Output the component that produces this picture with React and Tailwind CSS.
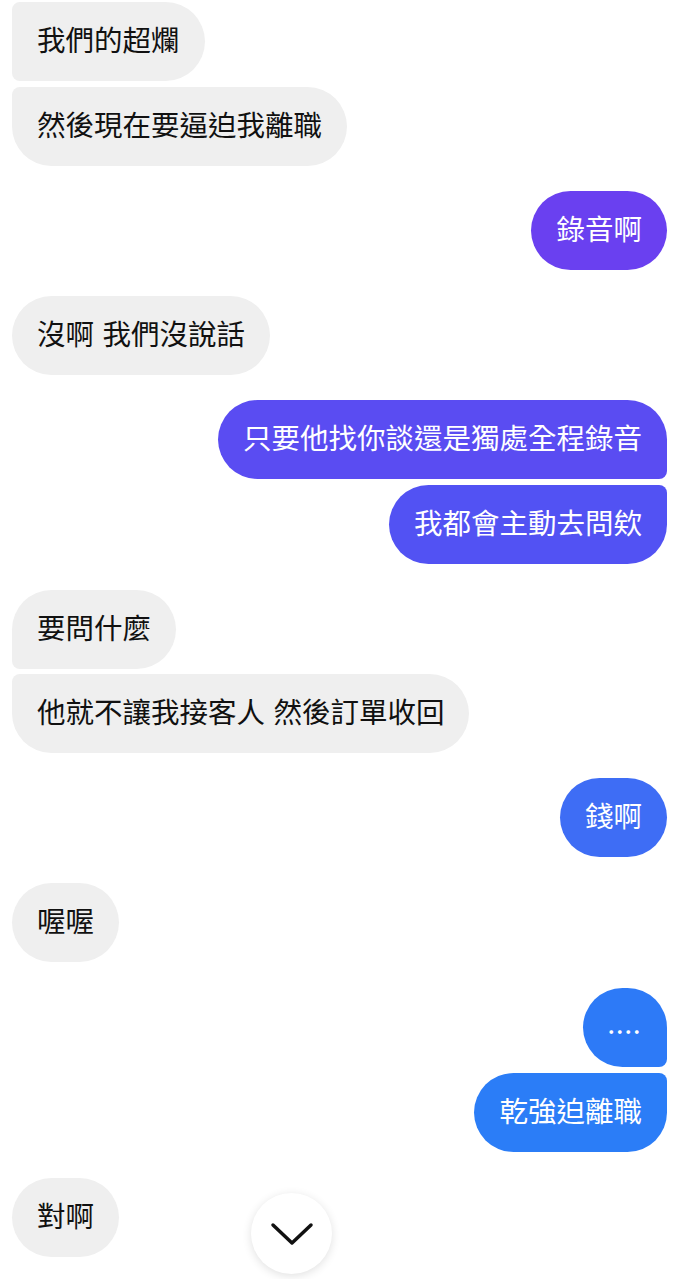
const font = { fontFamily: '"Noto Sans CJK TC", "Noto Sans", sans-serif' };

const messages = [
    { side: 'l', text: '我們的超爛', r: 'rounded-[40px] rounded-tl-[8px] rounded-bl-[8px]', mt: 'mt-0' },
    { side: 'l', text: '然後現在要逼迫我離職', r: 'rounded-[40px] rounded-tl-[8px]', mt: 'mt-[6px]' },
    { side: 'r', text: '錄音啊', r: 'rounded-[40px]', mt: 'mt-[25px]', bg: 'bg-[#6a40f0]' },
    { side: 'l', text: '沒啊 我們沒說話', r: 'rounded-[40px]', mt: 'mt-[26px]' },
    { side: 'r', text: '只要他找你談還是獨處全程錄音', r: 'rounded-[40px] rounded-br-[8px]', mt: 'mt-[25px]', bg: 'bg-[#5a4cf2]' },
    { side: 'r', text: '我都會主動去問欸', r: 'rounded-[40px] rounded-tr-[8px]', mt: 'mt-[6px]', bg: 'bg-[#5252f3]' },
    { side: 'l', text: '要問什麼', r: 'rounded-[40px] rounded-bl-[8px]', mt: 'mt-[26px]' },
    { side: 'l', text: '他就不讓我接客人 然後訂單收回', r: 'rounded-[40px] rounded-tl-[8px]', mt: 'mt-[5px]' },
    { side: 'r', text: '錢啊', r: 'rounded-[40px]', mt: 'mt-[25px]', bg: 'bg-[#3e6df5]' },
    { side: 'l', text: '喔喔', r: 'rounded-[40px]', mt: 'mt-[26px]' },
    { side: 'r', text: '....', r: 'rounded-[40px] rounded-br-[8px]', mt: 'mt-[26px]', bg: 'bg-[#2d7af7]', dots: true },
    { side: 'r', text: '乾強迫離職', r: 'rounded-[40px] rounded-tr-[8px]', mt: 'mt-[6px]', bg: 'bg-[#2b7df7]' },
    { side: 'l', text: '對啊', r: 'rounded-[40px]', mt: 'mt-[26px]' },
];

const Bubble = ({ m }) => {
    const left = m.side === 'l';
    return (
        <div className={`flex ${left ? 'justify-start' : 'justify-end'} ${m.mt}`}>
            <div
                className={`h-[79px] flex items-center px-[25px] pb-[4px] text-[28.5px] leading-none whitespace-pre [word-spacing:2px] ${m.r} ${
                    left ? 'bg-[#efefef] text-[#111]' : `${m.bg} text-white`
                }`}
            >
                {m.dots ? <span className="text-[20px] tracking-[2px] font-bold">{m.text}</span> : m.text}
            </div>
        </div>
    );
};

const App = () => {
    return (
        <div className="relative w-[684px] h-[1279px] overflow-hidden bg-white" style={font}>
            <div className="flex flex-col pl-[12px] pr-[17px] pt-[2px]">
                {messages.map((m, i) => (
                    <Bubble key={i} m={m} />
                ))}
            </div>

            {/* scroll to bottom */}
            <div className="absolute left-[251px] top-[1193px] w-[81px] h-[81px] rounded-full bg-white shadow-[0_2px_10px_rgba(0,0,0,0.12)] flex items-center justify-center">
                <svg width="44" height="26" viewBox="0 0 44 26" fill="none">
                    <polyline points="3,4 22,22 41,4" stroke="#111" strokeWidth="3.5" strokeLinecap="round" strokeLinejoin="round" />
                </svg>
            </div>
        </div>
    );
};

export default App;
